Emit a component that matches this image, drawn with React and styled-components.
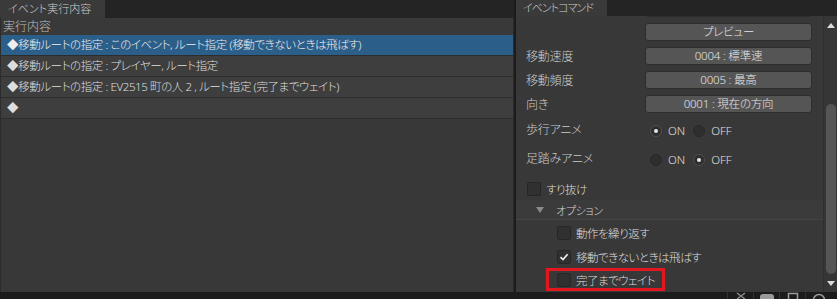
import React from 'react';
import styled, { createGlobalStyle } from 'styled-components';

const Global = createGlobalStyle`
  html, body { margin: 0; padding: 0; background: #1c1c1c; }
  body {
    font-family: "Noto Sans", "Noto Sans CJK JP", sans-serif;
    font-size: 11px;
    font-weight: 300;
    color: #d4d4d4;
    font-feature-settings: "palt";
  }
  * { box-sizing: border-box; }
`;

const Screen = styled.div`
  width: 837px;
  height: 299px;
  display: flex;
  flex-direction: column;
  overflow: hidden;
  background: #1c1c1c;
`;

const Workspace = styled.div`
  display: flex;
  height: 292px;
  gap: 2px;
`;

const Panel = styled.section`
  display: flex;
  flex-direction: column;
  width: ${p => p.$width}px;
  flex: none;
  background: #242424;
`;

const TabBar = styled.div`
  display: flex;
  height: ${p => p.$h}px;
  flex: none;
  background: #242424;
`;

const Tab = styled.div`
  width: ${p => p.$width}px;
  padding-left: ${p => p.$pad}px;
  background: #3a3a3a;
  color: #cdcdcd;
  font-size: 11px;
  line-height: ${p => p.$h}px;
  letter-spacing: ${p => p.$ls || 0}px;
  white-space: nowrap;
`;

/* ---------- left list ---------- */
const ListBody = styled.div`
  flex: 1;
  background: #383838;
  border-left: 1px solid #2c2c2c;
  border-right: 1px solid #2a2a2a;
  display: flex;
  flex-direction: column;
`;

const ListHeader = styled.div`
  height: 17px;
  line-height: 17px;
  padding-left: 2px;
  font-size: 12px;
  color: #bdbdbd;
  background: #393939;
`;

const ListRow = styled.div`
  height: 21px;
  line-height: 20px;
  padding-left: 6px;
  border-bottom: 1px solid #2d2d2d;
  background: ${p => (p.$selected ? '#2c5e8a' : '#3e3e3e')};
  color: ${p => (p.$selected ? '#eeeeee' : '#dedede')};
  font-size: 11.5px;
  letter-spacing: -0.4px;
  white-space: nowrap;
  overflow: hidden;
`;

/* ---------- right inspector ---------- */
const InspectorBody = styled.div`
  flex: 1;
  display: flex;
  background: #383838;
  overflow: hidden;
`;

const Viewport = styled.div`
  flex: 1;
  overflow: hidden;
`;

const Content = styled.div`
  display: flex;
  flex-direction: column;
  margin-top: -20px;
`;

const FieldRow = styled.div`
  display: flex;
  align-items: center;
  height: ${p => p.$h || 24}px;
  padding-left: 10px;
  flex: none;
`;

const Label = styled.div`
  width: 119px;
  color: #cccccc;
  font-size: 12px;
  letter-spacing: -0.2px;
  white-space: nowrap;
  margin-top: ${p => (p.$lift ? -3 : 0)}px;
`;

const ValueButton = styled.div`
  width: 167px;
  height: 18px;
  background: #555555;
  border: 1px solid #2e2e2e;
  border-radius: 3px;
  color: #e6e6e6;
  text-align: center;
  font-size: 11.5px;
  line-height: 16px;
  letter-spacing: -0.2px;
  white-space: nowrap;
`;

const RadioGroup = styled.div`
  display: flex;
  align-items: center;
  margin-left: 5px;
`;

const RadioOption = styled.label`
  display: flex;
  align-items: center;
  gap: 6px;
  margin-right: 8px;
  font-size: 11.5px;
  color: #e0e0e0;
`;

const RadioDot = styled.span`
  width: 12px;
  height: 12px;
  border-radius: 50%;
  background: #2e2e2e;
  border: 1px solid ${p => (p.$on ? '#505050' : '#2a2a2a')};
  display: flex;
  align-items: center;
  justify-content: center;
  &::after {
    content: '';
    width: 4px;
    height: 4px;
    border-radius: 50%;
    background: #e8e8e8;
    display: ${p => (p.$on ? 'block' : 'none')};
  }
`;

const CheckRow = styled.div`
  display: flex;
  align-items: center;
  height: ${p => p.$h || 24}px;
  padding-left: ${p => p.$indent}px;
  padding-top: ${p => p.$pt || 0}px;
  flex: none;
`;

const CheckItem = styled.label`
  display: flex;
  align-items: center;
  gap: 5px;
  color: #dedede;
  font-size: 11.5px;
  letter-spacing: -0.5px;
  white-space: nowrap;
`;

const Box = styled.span`
  width: 14px;
  height: 14px;
  background: #303030;
  border: 1px solid #262626;
  border-radius: 2px;
  display: flex;
  align-items: center;
  justify-content: center;
`;

const Highlight = styled.div`
  display: flex;
  align-items: center;
  border: 3px solid #e4161f;
  padding: 1px 7px 1px 8px;
  height: 23px;
  margin-left: -11px;
  margin-top: -3px;
`;

const GroupHeader = styled.div`
  display: flex;
  align-items: center;
  height: 20px;
  background: #3b3b3b;
  border-bottom: 1px solid #444;
  padding-left: 20px;
  margin-bottom: 1px;
  color: #d4d4d4;
  letter-spacing: -0.3px;
  flex: none;
`;

const Caret = styled.span`
  width: 0;
  height: 0;
  border-left: 4px solid transparent;
  border-right: 4px solid transparent;
  border-top: 6px solid #8a8a8a;
  margin-right: 12px;
`;

const ScrollBar = styled.div`
  width: 14px;
  flex: none;
  display: flex;
  flex-direction: column;
  border-left: 1px solid #2e2e2e;
  background: #363636;
`;

const ScrollArrow = styled.div`
  height: 18px;
  display: flex;
  align-items: center;
  justify-content: center;
  flex: none;
  &::after {
    content: '';
    border-left: 4px solid transparent;
    border-right: 4px solid transparent;
    ${p => (p.$up ? 'border-bottom: 5px solid #dcdcdc;' : 'border-top: 5px solid #dcdcdc;')}
  }
`;

const Track = styled.div`
  flex: 1;
  display: flex;
  flex-direction: column;
  align-items: center;
`;

const Thumb = styled.div`
  width: 10px;
  border-radius: 5px;
  background: #565656;
  margin-top: ${p => p.$offset}px;
  height: ${p => p.$size}px;
`;

/* ---------- status strip ---------- */
const StatusStrip = styled.div`
  height: 7px;
  display: flex;
  justify-content: flex-end;
  align-items: flex-start;
  background: #1c1c1c;
  overflow: hidden;
  padding-right: 6px;
`;

const StatusIcon = styled.div`
  width: 26px;
  height: 7px;
  border-left: 1px solid #333;
  display: flex;
  justify-content: center;
`;

const Check = () => (
  <svg width="10" height="10" viewBox="0 0 10 10">
    <path d="M1.5 5.2 L4 7.6 L8.6 2.2" fill="none" stroke="#f0f0f0" strokeWidth="1.6" />
  </svg>
);

const rows = [
  { text: '◆移動ルートの指定 : このイベント, ルート指定 (移動できないときは飛ばす)', selected: true },
  { text: '◆移動ルートの指定 : プレイヤー, ルート指定' },
  { text: '◆移動ルートの指定 : EV2515 町の人 2 , ルート指定 (完了までウェイト)' },
  { text: '◆' },
];

const Radio = ({ on, label }) => (
  <RadioOption>
    <RadioDot $on={on} />
    {label}
  </RadioOption>
);

export default function App() {
  return (
    <>
      <Global />
      <Screen>
        <Workspace>
          <Panel $width={514}>
            <TabBar $h={18}>
              <Tab $width={105} $pad={8} $h={18}>イベント実行内容</Tab>
            </TabBar>
            <ListBody>
              <ListHeader>実行内容</ListHeader>
              {rows.map((r, i) => (
                <ListRow key={i} $selected={r.selected}>{r.text}</ListRow>
              ))}
            </ListBody>
          </Panel>
          <Panel $width={321}>
            <TabBar $h={16}>
              <Tab $width={91} $pad={7} $h={16} $ls={-1}>イベントコマンド</Tab>
            </TabBar>
            <InspectorBody>
              <Viewport>
                <Content>
                  <FieldRow><Label /><ValueButton /></FieldRow>
                  <FieldRow><Label /><ValueButton>プレビュー</ValueButton></FieldRow>
                  <FieldRow><Label>移動速度</Label><ValueButton>0004 : 標準速</ValueButton></FieldRow>
                  <FieldRow><Label>移動頻度</Label><ValueButton>0005 : 最高</ValueButton></FieldRow>
                  <FieldRow><Label>向き</Label><ValueButton>0001 : 現在の方向</ValueButton></FieldRow>
                  <FieldRow $h={29}>
                    <Label $lift>歩行アニメ</Label>
                    <RadioGroup><Radio on label="ON" /><Radio label="OFF" /></RadioGroup>
                  </FieldRow>
                  <FieldRow $h={29}>
                    <Label $lift>足踏みアニメ</Label>
                    <RadioGroup><Radio label="ON" /><Radio on label="OFF" /></RadioGroup>
                  </FieldRow>
                  <CheckRow $indent={11} $h={26} $pt={4}>
                    <CheckItem><Box />すり抜け</CheckItem>
                  </CheckRow>
                  <GroupHeader><Caret />オプション</GroupHeader>
                  <CheckRow $indent={41}>
                    <CheckItem><Box />動作を繰り返す</CheckItem>
                  </CheckRow>
                  <CheckRow $indent={41}>
                    <CheckItem><Box><Check /></Box>移動できないときは飛ばす</CheckItem>
                  </CheckRow>
                  <CheckRow $indent={41}>
                    <Highlight>
                      <CheckItem><Box />完了までウェイト</CheckItem>
                    </Highlight>
                  </CheckRow>
                </Content>
              </Viewport>
              <ScrollBar>
                <ScrollArrow $up />
                <Track><Thumb $offset={70} $size={170} /></Track>
                <ScrollArrow />
              </ScrollBar>
            </InspectorBody>
          </Panel>
        </Workspace>
        <StatusStrip>
          <StatusIcon>
            <svg width="12" height="7" viewBox="0 0 12 7"><path d="M2 1 L10 7 M10 1 L2 7" stroke="#8a8a8a" strokeWidth="1.5" /></svg>
          </StatusIcon>
          <StatusIcon>
            <svg width="16" height="7" viewBox="0 0 16 7"><rect x="1" y="2" width="14" height="8" rx="3" fill="#9a9a9a" /></svg>
          </StatusIcon>
          <StatusIcon>
            <svg width="12" height="7" viewBox="0 0 12 7"><rect x="1.5" y="1.5" width="9" height="8" fill="none" stroke="#9a9a9a" strokeWidth="1.5" /></svg>
          </StatusIcon>
          <StatusIcon>
            <svg width="14" height="7" viewBox="0 0 14 7"><circle cx="7" cy="8" r="5.5" fill="none" stroke="#9a9a9a" strokeWidth="1.5" /></svg>
          </StatusIcon>
        </StatusStrip>
      </Screen>
    </>
  );
}
